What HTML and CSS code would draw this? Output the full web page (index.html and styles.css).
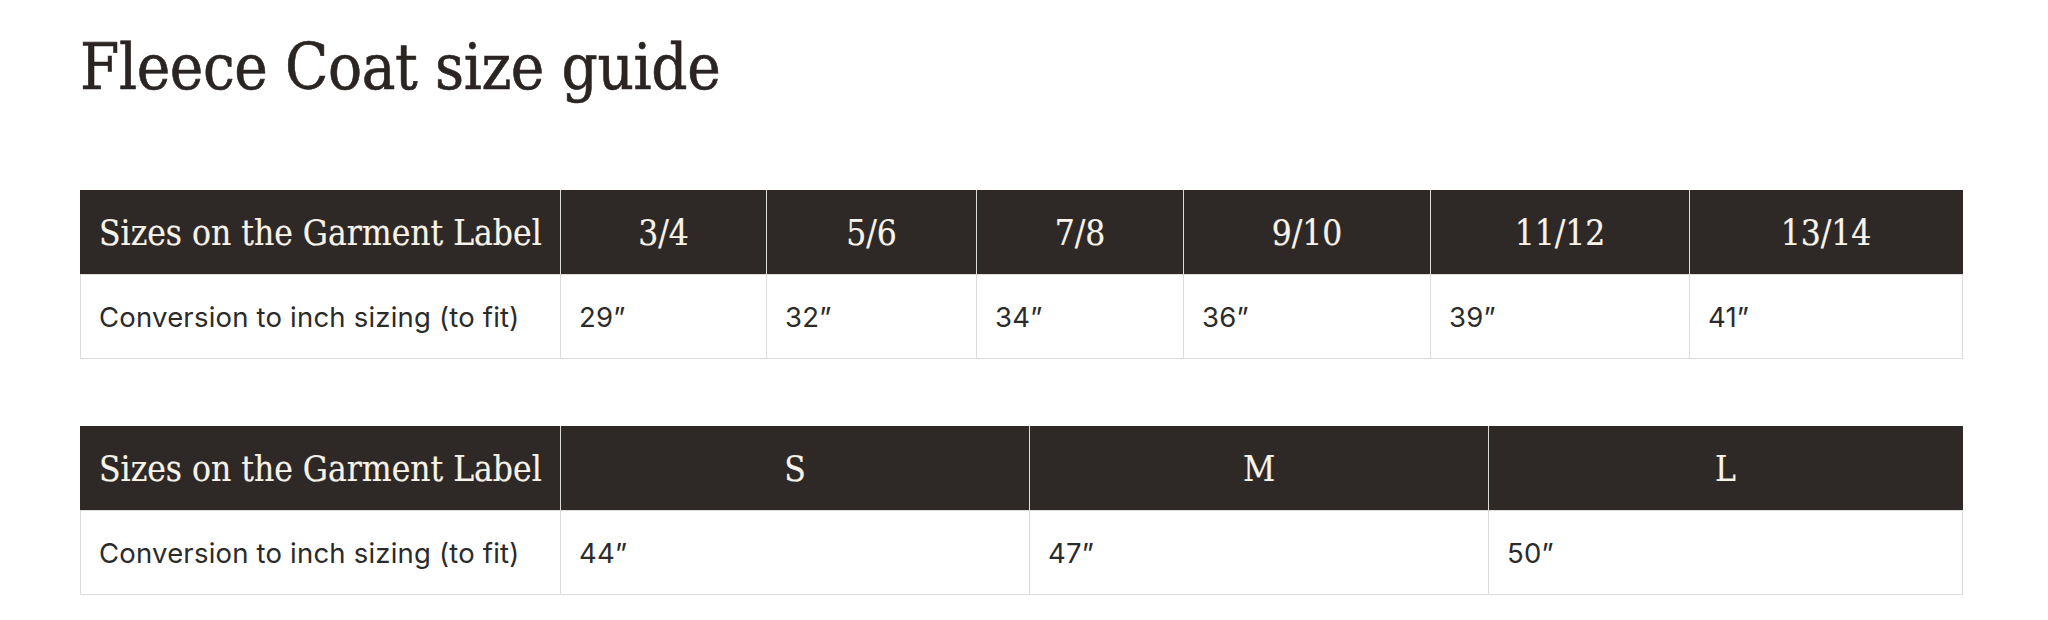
FILE: index.html
```html
<!DOCTYPE html>
<html lang="en">
<head>
<meta charset="utf-8">
<title>Fleece Coat size guide</title>
<link rel="stylesheet" href="styles.css">
</head>
<body>
<main class="guide">
  <h1 class="guide-title">Fleece Coat size guide</h1>

  <table class="size-table six">
    <thead>
      <tr>
        <th class="label">Sizes on the Garment Label</th>
        <th>3/4</th>
        <th>5/6</th>
        <th>7/8</th>
        <th>9/10</th>
        <th>11/12</th>
        <th>13/14</th>
      </tr>
    </thead>
    <tbody>
      <tr>
        <td class="label">Conversion to inch sizing (to fit)</td>
        <td>29”</td>
        <td>32”</td>
        <td>34”</td>
        <td>36”</td>
        <td>39”</td>
        <td>41”</td>
      </tr>
    </tbody>
  </table>

  <table class="size-table three">
    <thead>
      <tr>
        <th class="label">Sizes on the Garment Label</th>
        <th>S</th>
        <th>M</th>
        <th>L</th>
      </tr>
    </thead>
    <tbody>
      <tr>
        <td class="label">Conversion to inch sizing (to fit)</td>
        <td>44”</td>
        <td>47”</td>
        <td>50”</td>
      </tr>
    </tbody>
  </table>
</main>
</body>
</html>
```

FILE: styles.css
```css
html, body {
  margin: 0;
  padding: 0;
  background: #ffffff;
}

.guide {
  padding: 0 85px 0 80px;
  color: #2e2926;
}

.guide-title {
  margin: 0;
  padding-top: 28px;
  font-family: "DejaVu Serif", "Liberation Serif", serif;
  font-stretch: condensed;
  font-weight: normal;
  font-size: 63px;
  line-height: 80px;
  color: #2a2522;
  letter-spacing: -0.4px;
  -webkit-text-stroke: 0.6px #2a2522;
}

.size-table {
  width: 100%;
  border-collapse: collapse;
  table-layout: fixed;
  margin-top: 82px;
}

.size-table + .size-table {
  margin-top: 67px;
}

.size-table th,
.size-table td {
  border: 1px solid #dcdcdc;
}

.size-table th {
  background: #2e2926;
  color: #f8f3e9;
  font-family: "DejaVu Serif", "Liberation Serif", serif;
  font-stretch: condensed;
  font-weight: normal;
  font-size: 35px;
  height: 83px;
  padding: 0 18px;
  text-align: center;
  white-space: nowrap;
  border-top-color: #2e2926;
  -webkit-text-stroke: 0.2px #f8f3e9;
}

.size-table th:first-child {
  border-left-color: #2e2926;
}

.size-table th:last-child {
  border-right-color: #2e2926;
}

.size-table th.label {
  text-align: left;
  width: 443px;
}

.size-table td {
  font-family: "Inter", "Liberation Sans", sans-serif;
  font-size: 27.5px;
  letter-spacing: 0.2px;
  color: #2b2b2b;
  height: 83px;
  padding: 0 18px;
  text-align: left;
}

.six th:nth-child(2) { width: 169px; }
.six th:nth-child(3) { width: 173px; }
.six th:nth-child(4) { width: 170px; }
.six th:nth-child(5) { width: 210px; }
.six th:nth-child(6) { width: 222px; }
.six th:nth-child(7) { width: auto; }

.three th:nth-child(2) { width: 432px; }
.three th:nth-child(3) { width: 422px; }
.three th:nth-child(4) { width: auto; }
```
